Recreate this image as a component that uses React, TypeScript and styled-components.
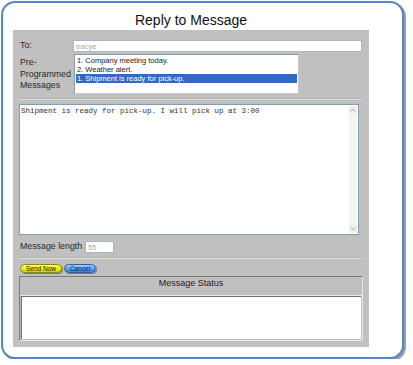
import styled, { createGlobalStyle } from 'styled-components';

const GlobalStyle = createGlobalStyle`
    body {
        margin: 0;
        background: #ffffff;
        font-family: "Liberation Sans", Arial, sans-serif;
    }
`;

const Card = styled.div`
    box-sizing: border-box;
    width: 403px;
    height: 358px;
    margin: 1px 0 0 1px;
    border: 2px solid #4f86cd;
    border-radius: 14px;
    box-shadow: 2px 2px 1px #9a9a9a;
    background: #ffffff;
`;

const Title = styled.h1`
    width: 356px;
    margin: 0 0 1px 10px;
    padding-top: 9px;
    font-size: 14px;
    line-height: 17px;
    font-weight: 400;
    text-align: center;
    color: #111;
`;

const Panel = styled.div`
    box-sizing: border-box;
    width: 356px;
    height: 317px;
    margin-left: 10px;
    padding: 10px 6px 0 6px;
    background: #c0c0c0;
    display: flex;
    flex-direction: column;
`;

const FieldRow = styled.div<{ top?: number }>`
    display: flex;
    align-items: flex-start;
    margin-top: ${(p) => p.top ?? 0}px;
`;

const Label = styled.div<{ width?: number }>`
    width: ${(p) => (p.width ? `${p.width}px` : 'auto')};
    padding-left: 1px;
    font-size: 8.8px;
    line-height: 11.5px;
    color: #2a2a2a;
`;

const TextInput = styled.input<{ width: number }>`
    box-sizing: border-box;
    width: ${(p) => p.width}px;
    height: 12px;
    padding: 0 2px;
    border: 1px solid #a7b7c8;
    background: #ffffff;
    font-family: "Liberation Sans", Arial, sans-serif;
    font-size: 7.5px;
    color: #a8a8a8;
    outline: none;
`;

const List = styled.div`
    box-sizing: border-box;
    width: 225px;
    height: 40px;
    margin-left: 1px;
    padding: 1px;
    border: 1px solid #8e9aa6;
    border-right-color: #c8c8c8;
    border-bottom-color: #c8c8c8;
    background: #ffffff;
`;

const ListItem = styled.div<{ selected?: boolean }>`
    height: 9px;
    padding-left: 1px;
    font-size: 7.5px;
    line-height: 9px;
    white-space: nowrap;
    color: ${(p) => (p.selected ? '#ffffff' : '#1a1a1a')};
    background: ${(p) => (p.selected ? '#316ac5' : 'transparent')};
`;

const Divider = styled.div<{ top: number }>`
    width: 343px;
    height: 1px;
    margin-top: ${(p) => p.top}px;
    background: #e4e2d4;
    border-top: 1px solid #b2b2b2;
`;

const Editor = styled.div`
    box-sizing: border-box;
    width: 340px;
    height: 131px;
    margin-top: 4px;
    border: 1px solid #7f9db9;
    background: #ffffff;
    display: flex;
`;

const MessageText = styled.textarea`
    flex: 1;
    margin: 0;
    padding: 2px 1px;
    border: none;
    resize: none;
    overflow: hidden;
    outline: none;
    font-family: "Liberation Mono", "Courier New", monospace;
    font-size: 7.5px;
    line-height: 9px;
    color: #333;
`;

const ScrollTrack = styled.div`
    width: 8px;
    margin: 1px 1px 1px 0;
    background: #f6f6f0;
    display: flex;
    flex-direction: column;
    justify-content: space-between;
`;

const ScrollButton = styled.div`
    height: 8px;
    display: flex;
    align-items: center;
    justify-content: center;
    background: #eeeee6;
`;

const LengthRow = styled.div`
    display: flex;
    align-items: center;
    gap: 3px;
    margin-top: 6px;
`;

const ButtonRow = styled.div`
    display: flex;
    gap: 2px;
    margin-top: 5px;
    padding-left: 1px;
`;

const PillButton = styled.button<{ tone: 'yellow' | 'blue'; width: number }>`
    box-sizing: border-box;
    width: ${(p) => p.width}px;
    height: 9px;
    padding: 0;
    border: 1px solid ${(p) => (p.tone === 'yellow' ? '#8a8a10' : '#2f5f9f')};
    border-radius: 5px;
    background: ${(p) =>
        p.tone === 'yellow'
            ? 'linear-gradient(#ffff80, #f0f000 50%, #d0d000)'
            : 'linear-gradient(#a8d0ff, #5aa0f0 50%, #3a80d8)'};
    box-shadow: 1px 1px 0 #7a7a7a;
    font-family: "Liberation Sans", Arial, sans-serif;
    font-size: 6.5px;
    line-height: 7px;
    color: ${(p) => (p.tone === 'yellow' ? '#1a1a00' : '#0a2a5a')};
`;

const StatusBox = styled.div`
    box-sizing: border-box;
    width: 344px;
    height: 65px;
    margin-top: 3px;
    border: 1px solid #7a7a7a;
    border-right-color: #e8e8e8;
    border-bottom-color: #e8e8e8;
    display: flex;
    flex-direction: column;
`;

const StatusHeader = styled.div`
    height: 18px;
    border-bottom: 1px solid #eaeaea;
    font-size: 9px;
    line-height: 13px;
    text-align: center;
    color: #222;
`;

const StatusBody = styled.div`
    flex: 1;
    margin: 0 1px 1px 1px;
    background: #ffffff;
    border-top: 1px solid #6e6e6e;
    border-left: 1px solid #6e6e6e;
`;

const Chevron = ({ up }: { up?: boolean }) => (
    <svg width="6" height="4" viewBox="0 0 6 4">
        <path d={up ? 'M0.5 3.5 L3 1 L5.5 3.5' : 'M0.5 0.5 L3 3 L5.5 0.5'} fill="none" stroke="#b8b8b0" strokeWidth="1" />
    </svg>
);

function App() {
    return (
        <>
            <GlobalStyle />
            <Card>
                <Title>Reply to Message</Title>
                <Panel>
                    <FieldRow>
                        <Label width={53}>To:</Label>
                        <TextInput width={289} defaultValue="tracye" readOnly />
                    </FieldRow>
                    <FieldRow top={2}>
                        <Label width={53} style={{ paddingTop: 3 }}>
                            Pre-
                            <br />
                            Programmed
                            <br />
                            Messages
                        </Label>
                        <List>
                            <ListItem>1. Company meeting today.</ListItem>
                            <ListItem>2. Weather alert.</ListItem>
                            <ListItem selected>1. Shipment is ready for pick-up.</ListItem>
                        </List>
                    </FieldRow>
                    <Divider top={4} />
                    <Editor>
                        <MessageText defaultValue="Shipment is ready for pick-up. I will pick up at 3:00" />
                        <ScrollTrack>
                            <ScrollButton><Chevron up /></ScrollButton>
                            <ScrollButton><Chevron /></ScrollButton>
                        </ScrollTrack>
                    </Editor>
                    <LengthRow>
                        <Label>Message length</Label>
                        <TextInput width={29} defaultValue="55" readOnly />
                    </LengthRow>
                    <Divider top={4} />
                    <ButtonRow>
                        <PillButton tone="yellow" width={42}>Send Now</PillButton>
                        <PillButton tone="blue" width={32}>Cancel</PillButton>
                    </ButtonRow>
                    <StatusBox>
                        <StatusHeader>Message Status</StatusHeader>
                        <StatusBody />
                    </StatusBox>
                </Panel>
            </Card>
        </>
    );
}

export default App;
